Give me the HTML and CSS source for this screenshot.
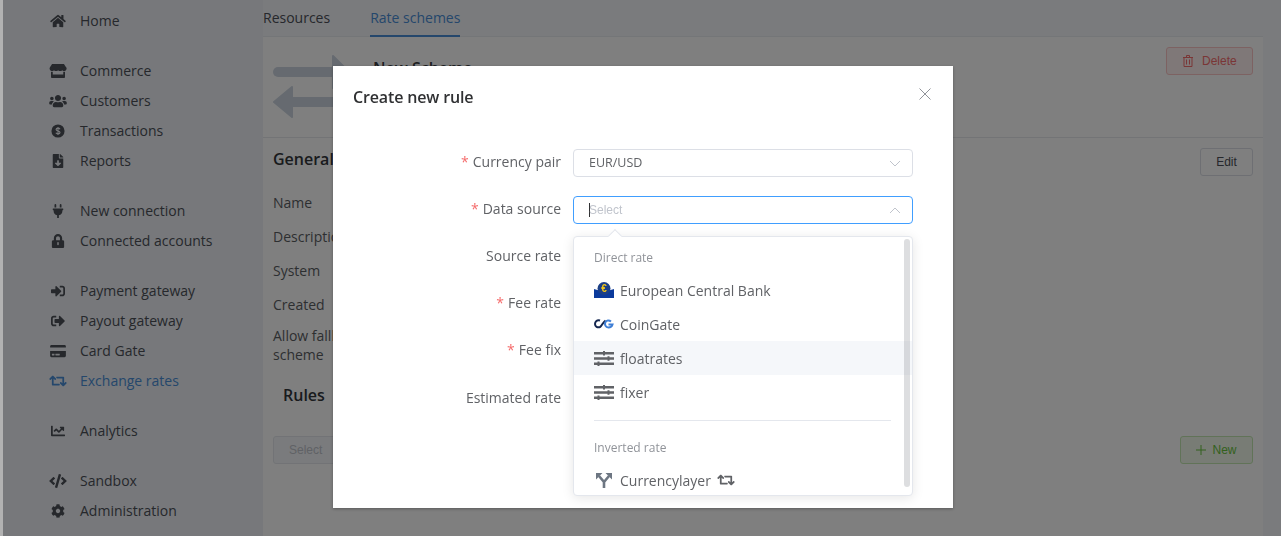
FILE: index.html
```html
<!DOCTYPE html>
<html lang="en">
<head>
    <meta charset="UTF-8">
    <meta name="viewport" content="width=device-width, initial-scale=1.0">
    <title>Rate schemes</title>
    <link rel="stylesheet" href="styles.css">
</head>
<body>

    <svg class="icon-defs" aria-hidden="true">
        <symbol id="i-home" viewBox="0 0 576 512"><path d="M280.37 148.26L96 300.11V464a16 16 0 0 0 16 16l112.06-.29a16 16 0 0 0 15.92-16V368a16 16 0 0 1 16-16h64a16 16 0 0 1 16 16v95.64a16 16 0 0 0 16 16.05L464 480a16 16 0 0 0 16-16V300L295.67 148.26a12.19 12.19 0 0 0-15.3 0zM571.6 251.47L488 182.56V44.05a12 12 0 0 0-12-12h-56a12 12 0 0 0-12 12v72.61L318.47 43a48 48 0 0 0-61 0L4.34 251.47a12 12 0 0 0-1.6 16.9l25.5 31A12 12 0 0 0 45.15 301l235.22-193.74a12.19 12.19 0 0 1 15.3 0L530.9 301a12 12 0 0 0 16.9-1.6l25.5-31a12 12 0 0 0-1.7-16.93z"/></symbol>
        <symbol id="i-store" viewBox="0 0 616 512"><path d="M602 118.6L537.1 15C531.3 5.7 521 0 510 0H106C95 0 84.7 5.7 78.9 15L14 118.6c-33.9 54.1-3.9 129.3 59.4 137.9 4.6.6 9.1.9 13.7.9 29.9 0 56.4-13.1 74.8-33.4 18.4 20.3 45 33.4 74.8 33.4 29.9 0 56.4-13.1 74.8-33.4 18.4 20.3 45 33.4 74.8 33.4 29.9 0 56.4-13.1 74.8-33.4 18.5 20.3 45 33.4 74.8 33.4 4.7 0 9.2-.3 13.7-.9 63.5-8.5 93.6-83.7 59.6-137.9zM529.5 288c-10 0-19.9-1.5-29.5-3.8V384H116v-99.8c-9.6 2.2-19.5 3.8-29.5 3.8-6 0-12.1-.4-18-1.2-5.6-.8-11.1-2.1-16.4-3.6V480c0 17.7 14.3 32 32 32h448c17.7 0 32-14.3 32-32V283.2c-5.4 1.6-10.8 2.9-16.4 3.6-6.1.8-12.1 1.2-18.2 1.2z"/></symbol>
        <symbol id="i-users" viewBox="0 0 640 512"><path d="M96 224c35.3 0 64-28.7 64-64s-28.7-64-64-64-64 28.7-64 64 28.7 64 64 64zm448 0c35.3 0 64-28.7 64-64s-28.7-64-64-64-64 28.7-64 64 28.7 64 64 64zm32 32h-64c-17.6 0-33.5 7.1-45.1 18.6 40.3 22.1 68.9 62 75.1 109.4h66c17.7 0 32-14.3 32-32v-32c0-35.3-28.7-64-64-64zm-256 0c61.9 0 112-50.1 112-112S381.9 32 320 32 208 82.1 208 144s50.1 112 112 112zm76.8 32h-8.3c-20.8 10-43.9 16-68.5 16s-47.6-6-68.5-16h-8.3C179.6 288 128 339.6 128 403.2V432c0 26.5 21.5 48 48 48h288c26.5 0 48-21.5 48-48v-28.8c0-63.6-51.6-115.2-115.2-115.2zm-223.7-13.4C161.5 263.1 145.6 256 128 256H64c-35.3 0-64 28.7-64 64v32c0 17.7 14.3 32 32 32h65.9c6.3-47.4 34.9-87.3 75.2-109.4z"/></symbol>
        <symbol id="i-dollar" viewBox="0 0 16 16"><circle cx="8" cy="8" r="7.5"/><path d="M10.3 5.900C9.900 5 9 4.700 8 4.700c-1.200 0-2.200.6-2.200 1.600 0 2.200 4.500 1.200 4.500 3.400 0 1-1 1.600-2.300 1.600-1.100 0-2-.4-2.400-1.300M8 3.500v9" fill="none" stroke="#eef1f6" stroke-width="1.300"/></symbol>
        <symbol id="i-report" viewBox="0 0 384 512"><path d="M224 136V0H24C10.7 0 0 10.7 0 24v464c0 13.3 10.7 24 24 24h336c13.3 0 24-10.7 24-24V160H248c-13.2 0-24-10.8-24-24zm76.45 211.36l-96.42 95.7c-6.65 6.61-17.39 6.61-24.04 0l-96.42-95.7C73.42 337.29 80.54 320 94.82 320H160v-80c0-8.84 7.16-16 16-16h32c8.84 0 16 7.16 16 16v80h65.18c14.28 0 21.4 17.29 11.27 27.36zM377 105L279.1 7c-4.5-4.5-10.6-7-17-7H256v128h128v-6.1c0-6.3-2.5-12.4-7-16.9z"/></symbol>
        <symbol id="i-plug" viewBox="0 0 384 512"><path d="M320,32a32,32,0,0,0-64,0v96h64Zm48,128H16A16,16,0,0,0,0,176v32a16,16,0,0,0,16,16H32v32A160.07,160.07,0,0,0,160,412.8V512h64V412.8A160.07,160.07,0,0,0,352,256V224h16a16,16,0,0,0,16-16V176A16,16,0,0,0,368,160ZM128,32a32,32,0,0,0-64,0v96h64Z"/></symbol>
        <symbol id="i-lock" viewBox="0 0 448 512"><path d="M400 224h-24v-72C376 68.2 307.8 0 224 0S72 68.2 72 152v72H48c-26.500 0-48 21.500-48 48v192c0 26.500 21.500 48 48 48h352c26.500 0 48-21.500 48-48V272c0-26.500-21.500-48-48-48zm-104 0H152v-72c0-39.700 32.300-72 72-72s72 32.300 72 72v72z"/><path d="M224 320v64" stroke="#eef1f6" stroke-width="56" stroke-linecap="round"/></symbol>
        <symbol id="i-signin" viewBox="0 0 512 512"><path d="M416 448h-84c-6.600 0-12-5.400-12-12v-40c0-6.600 5.400-12 12-12h84c17.700 0 32-14.300 32-32V160c0-17.700-14.300-32-32-32h-84c-6.600 0-12-5.400-12-12V76c0-6.600 5.400-12 12-12h84c53 0 96 43 96 96v192c0 53-43 96-96 96zm-47-201L201 79c-15-15-41-4.500-41 17v96H24c-13.300 0-24 10.700-24 24v96c0 13.300 10.700 24 24 24h136v96c0 21.500 26 32 41 17l168-168c9.300-9.400 9.300-24.600 0-34z"/></symbol>
        <symbol id="i-signout" viewBox="0 0 512 512"><path d="M497 273L329 441c-15 15-41 4.500-41-17v-96H152c-13.300 0-24-10.700-24-24v-96c0-13.300 10.700-24 24-24h136V88c0-21.400 25.900-32 41-17l168 168c9.300 9.400 9.300 24.600 0 34zM192 436v-40c0-6.600-5.400-12-12-12H96c-17.700 0-32-14.300-32-32V160c0-17.700 14.300-32 32-32h84c6.600 0 12-5.400 12-12V76c0-6.600-5.400-12-12-12H96c-53 0-96 43-96 96v192c0 53 43 96 96 96h84c6.600 0 12-5.400 12-12z"/></symbol>
        <symbol id="i-card" viewBox="0 0 576 512"><path d="M0 432c0 26.500 21.500 48 48 48h480c26.500 0 48-21.500 48-48V256H0v176zm192-68c0-6.600 5.400-12 12-12h136c6.600 0 12 5.400 12 12v40c0 6.600-5.400 12-12 12H204c-6.600 0-12-5.400-12-12v-40zm-128 0c0-6.600 5.400-12 12-12h72c6.600 0 12 5.400 12 12v40c0 6.600-5.400 12-12 12H76c-6.600 0-12-5.400-12-12v-40zM576 80v48H0V80c0-26.500 21.500-48 48-48h480c26.500 0 48 21.500 48 48z"/></symbol>
        <symbol id="i-retweet" viewBox="0 0 640 512"><path d="M629.657 343.598L528.971 444.284c-9.373 9.372-24.568 9.372-33.941 0L394.343 343.598c-9.373-9.373-9.373-24.569 0-33.941l10.823-10.823c9.562-9.562 25.133-9.340 34.419.492L480 342.118V160H292.451a24.005 24.005 0 0 1-16.971-7.029l-16-16C244.361 121.851 255.069 96 276.451 96H520c13.255 0 24 10.745 24 24v222.118l40.416-42.792c9.285-9.831 24.856-10.054 34.419-.492l10.823 10.823c9.372 9.372 9.372 24.569-.001 33.941zm-265.138 15.431A23.999 23.999 0 0 0 347.548 352H160V169.881l40.416 42.792c9.286 9.831 24.856 10.054 34.419.491l10.822-10.822c9.373-9.373 9.373-24.569 0-33.941L144.971 67.716c-9.373-9.373-24.569-9.373-33.941 0L10.343 168.402c-9.373 9.373-9.373 24.569 0 33.941l10.822 10.822c9.562 9.562 25.133 9.340 34.419-.491L96 169.881V392c0 13.255 10.745 24 24 24h243.549c21.382 0 32.090-25.851 16.971-40.971l-16.001-16z"/></symbol>
        <symbol id="i-chart" viewBox="0 0 512 512"><path d="M496 384H64V80c0-8.840-7.160-16-16-16H16C7.160 64 0 71.160 0 80v336c0 17.670 14.330 32 32 32h464c8.840 0 16-7.160 16-16v-32c0-8.840-7.160-16-16-16zM464 96H345.940c-21.380 0-32.090 25.850-16.970 40.970l32.400 32.400L288 242.750l-73.370-73.370c-12.500-12.500-32.760-12.500-45.250 0l-68.690 68.690c-6.250 6.250-6.250 16.380 0 22.630l22.620 22.620c6.250 6.250 16.380 6.250 22.630 0L192 237.250l73.370 73.370c12.500 12.500 32.760 12.500 45.250 0l96-96 32.400 32.400c15.120 15.120 40.970 4.410 40.970-16.970V112c.01-8.840-7.150-16-15.990-16z"/></symbol>
        <symbol id="i-code" viewBox="0 0 640 512"><path d="M278.900 511.500l-61-17.700c-6.400-1.800-10-8.500-8.200-14.900L346.200 8.700c1.800-6.400 8.500-10 14.900-8.200l61 17.700c6.400 1.800 10 8.500 8.200 14.900L293.800 503.300c-1.900 6.400-8.500 10.100-14.900 8.200zm-114-112.200l43.500-46.400c4.600-4.900 4.300-12.700-.8-17.200L117 256l90.600-79.700c5.100-4.500 5.500-12.300.8-17.200l-43.500-46.400c-4.500-4.800-12.100-5.100-17-.5L3.800 247.200c-5.100 4.700-5.100 12.800 0 17.500l144.100 135.100c4.900 4.600 12.500 4.400 17-.5zm327.200.6l144.100-135.100c5.100-4.700 5.100-12.800 0-17.500L492.100 112.100c-4.800-4.500-12.400-4.300-17 .5L431.600 159c-4.600 4.900-4.300 12.700.8 17.200L523 256l-90.600 79.700c-5.100 4.500-5.500 12.300-.8 17.200l43.500 46.400c4.500 4.900 12.100 5.100 17 .6z"/></symbol>
        <symbol id="i-cog" viewBox="0 0 512 512"><path d="M487.400 315.700l-42.600-24.600c4.300-23.200 4.300-47 0-70.200l42.600-24.600c4.900-2.800 7.100-8.600 5.500-14-11.100-35.600-30-67.800-54.700-94.600-3.800-4.100-10-5.100-14.800-2.300L380.800 110c-17.900-15.400-38.500-27.300-60.800-35.100V25.800c0-5.600-3.900-10.500-9.400-11.700-36.700-8.200-74.300-7.800-109.200 0-5.500 1.200-9.400 6.100-9.400 11.700V75c-22.200 7.900-42.800 19.800-60.800 35.100L88.700 85.500c-4.900-2.800-11-1.900-14.800 2.300-24.700 26.700-43.600 58.900-54.700 94.600-1.700 5.400.6 11.200 5.500 14L67.300 221c-4.300 23.200-4.300 47 0 70.200l-42.600 24.600c-4.900 2.800-7.100 8.600-5.500 14 11.100 35.600 30 67.800 54.700 94.600 3.800 4.100 10 5.100 14.800 2.300l42.600-24.600c17.900 15.400 38.500 27.300 60.800 35.100v49.200c0 5.600 3.900 10.500 9.400 11.700 36.700 8.200 74.300 7.800 109.200 0 5.500-1.200 9.400-6.100 9.400-11.700v-49.200c22.200-7.900 42.800-19.800 60.800-35.100l42.600 24.600c4.900 2.800 11 1.900 14.800-2.300 24.700-26.700 43.600-58.900 54.700-94.600 1.500-5.500-.7-11.300-5.600-14.100zM256 336c-44.100 0-80-35.900-80-80s35.900-80 80-80 80 35.900 80 80-35.900 80-80 80z"/></symbol>
        <symbol id="i-sliders" viewBox="0 0 20 18">
            <path d="M0 3h20v2.500H0zM0 8.300h20v2.500H0zM0 13.600h20v2.500H0z"/>
            <path d="M9 2h2v4.500H9zM13.500 7.300h2v4.500h-2zM3.500 12.600h2v4.500h-2z"/>
        </symbol>
    </svg>

    <div class="app">
        <nav class="sidebar">
            <div class="nav-group">
                <a class="nav-item"><svg class="nav-icon"><use href="#i-home"/></svg>Home</a>
            </div>
            <div class="nav-group">
                <a class="nav-item"><svg class="nav-icon"><use href="#i-store"/></svg>Commerce</a>
                <a class="nav-item"><svg class="nav-icon"><use href="#i-users"/></svg>Customers</a>
                <a class="nav-item"><svg class="nav-icon"><use href="#i-dollar"/></svg>Transactions</a>
                <a class="nav-item"><svg class="nav-icon"><use href="#i-report"/></svg>Reports</a>
            </div>
            <div class="nav-group">
                <a class="nav-item"><svg class="nav-icon"><use href="#i-plug"/></svg>New connection</a>
                <a class="nav-item"><svg class="nav-icon"><use href="#i-lock"/></svg>Connected accounts</a>
            </div>
            <div class="nav-group">
                <a class="nav-item"><svg class="nav-icon"><use href="#i-signin"/></svg>Payment gateway</a>
                <a class="nav-item"><svg class="nav-icon"><use href="#i-signout"/></svg>Payout gateway</a>
                <a class="nav-item"><svg class="nav-icon"><use href="#i-card"/></svg>Card Gate</a>
                <a class="nav-item active"><svg class="nav-icon"><use href="#i-retweet"/></svg>Exchange rates</a>
            </div>
            <div class="nav-group">
                <a class="nav-item"><svg class="nav-icon"><use href="#i-chart"/></svg>Analytics</a>
            </div>
            <div class="nav-group">
                <a class="nav-item"><svg class="nav-icon"><use href="#i-code"/></svg>Sandbox</a>
                <a class="nav-item"><svg class="nav-icon"><use href="#i-cog"/></svg>Administration</a>
            </div>
        </nav>

        <main class="content">
            <div class="tabs">
                <span class="tab">Resources</span>
                <span class="tab active">Rate schemes</span>
            </div>

            <section class="card">
                <header class="card-head">
                    <svg class="scheme-icon" viewBox="0 0 90 64" fill="none" stroke="#ccd5e0">
                        <path d="M5 17h68" stroke-width="10" stroke-linecap="round"/>
                        <path d="M60 1l16 16-16 16z" fill="#ccd5e0" stroke-width="2" stroke-linejoin="round"/>
                        <path d="M18 47h62" stroke-width="10" stroke-linecap="round"/>
                        <path d="M19 32L1 47l18 15z" fill="#ccd5e0" stroke-width="2" stroke-linejoin="round"/>
                    </svg>
                    <h2 class="scheme-name">New Scheme</h2>
                    <button class="btn btn-danger">
                        <svg class="btn-icon" viewBox="0 0 10 12" fill="none" stroke="currentColor"><path d="M0 2.500h10M3.500 2.500V.5h3v2M1 2.500V11.500h8V2.500M3.500 4.500v5M6.500 4.500v5"/></svg>
                        Delete
                    </button>
                </header>

                <div class="general-head">
                    <h3 class="section-title">General information</h3>
                    <button class="btn btn-edit">Edit</button>
                </div>

                <dl class="details">
                    <dt>Name</dt>
                    <dt>Description</dt>
                    <dt>System</dt>
                    <dt>Created</dt>
                    <dt class="wrap">Allow fallback scheme</dt>
                </dl>

                <h3 class="section-title rules-title">Rules</h3>

                <div class="rules-bar">
                    <div class="rules-select">Select</div>
                    <button class="btn btn-success">
                        <svg class="plus" viewBox="0 0 10 10" fill="none" stroke="currentColor"><path d="M5 0v10M0 5h10"/></svg>
                        New
                    </button>
                </div>
            </section>
        </main>
    </div>

    <div class="overlay">
        <div class="modal">
            <div class="modal-head">
                <span class="modal-title">Create new rule</span>
                <svg class="modal-close" viewBox="0 0 12 12" fill="none" stroke="currentColor"><path d="M.5.5l11 11M11.500.5l-11 11"/></svg>
            </div>

            <form class="rule-form">
                <div class="form-row">
                    <label><span class="req">*</span>Currency pair</label>
                    <div class="select">
                        <span class="select-value">EUR/USD</span>
                        <svg class="chevron" viewBox="0 0 12 7" fill="none" stroke="currentColor"><path d="M1 1l5 5 5-5"/></svg>
                    </div>
                </div>
                <div class="form-row">
                    <label><span class="req">*</span>Data source</label>
                    <div class="select focused">
                        <span class="select-caret"></span>
                        <span class="select-placeholder">Select</span>
                        <svg class="chevron" viewBox="0 0 12 7" fill="none" stroke="currentColor"><path d="M1 6l5-5 5 5"/></svg>
                    </div>
                </div>
                <div class="form-row"><label>Source rate</label></div>
                <div class="form-row"><label><span class="req">*</span>Fee rate</label></div>
                <div class="form-row"><label><span class="req">*</span>Fee fix</label></div>
                <div class="form-row last"><label>Estimated rate</label></div>
            </form>

            <div class="dropdown">
                <span class="dropdown-arrow"></span>
                <div class="group-label">Direct rate</div>
                <div class="option">
                    <svg class="option-icon" viewBox="0 0 20 16">
                        <path d="M0 7l5 1.500c3 1 7 1 10 0L20 7v9H0z" fill="#0b3a9c"/>
                        <circle cx="10" cy="6.500" r="6.500" fill="#1c3f86"/>
                        <text x="10" y="10" text-anchor="middle" class="ecb-euro">€</text>
                    </svg>
                    European Central Bank
                </div>
                <div class="option">
                    <svg class="option-icon" viewBox="0 0 20 10" fill="none" stroke-width="2">
                        <path d="M6 1.500C3 .5 1 2.500 1 5s2.500 4 5 3c2-1 3-5 5.500-6.500" stroke="#14264f"/>
                        <path d="M17 2.500C15 .8 12.500 1.200 11.500 3c-1.300 2.300 0 5.500 3 5.500 2.200 0 3.500-1.300 4-3H14.500" stroke="#3f7fd6"/>
                    </svg>
                    CoinGate
                </div>
                <div class="option hover">
                    <svg class="option-icon sliders"><use href="#i-sliders"/></svg>
                    floatrates
                </div>
                <div class="option">
                    <svg class="option-icon sliders"><use href="#i-sliders"/></svg>
                    fixer
                </div>
                <div class="group-sep"></div>
                <div class="group-label">Inverted rate</div>
                <div class="option">
                    <svg class="option-icon" viewBox="0 0 20 16" fill="none" stroke="#6d7682" stroke-width="2.600">
                        <path d="M10 16V10L5 4M10 10l5-6"/>
                        <path d="M2 1h6.500L2 7.500zM18 1h-6.500L18 7.500z" fill="#6d7682" stroke="none"/>
                    </svg>
                    Currencylayer
                    <svg class="retweet"><use href="#i-retweet"/></svg>
                </div>
                <span class="scroll-thumb"></span>
            </div>
        </div>
    </div>

</body>
</html>
```

FILE: styles.css
```css
* { box-sizing: border-box; }
html, body { margin: 0; height: 100%; overflow: hidden; }
body {
    width: 1281px;
    height: 536px;
    font-family: "Open Sans", sans-serif;
    font-size: 14px;
    color: #4c5058;
    background: #f4f6fa;
}
.icon-defs { display: none; }

.app {
    display: flex;
    height: 536px;
    border-left: 3px solid #b2b2b2;
}

/* sidebar */
.sidebar {
    width: 260px;
    flex: none;
    padding-top: 6px;
    background: #eef1f6;
}
.nav-group { margin-bottom: 20px; }
.nav-item {
    display: flex;
    align-items: center;
    height: 30px;
    padding-left: 46px;
    color: #4c5058;
    line-height: 30px;
}
.nav-item.active { color: #4a8fd8; }
.nav-icon {
    width: 18px;
    height: 14px;
    margin-right: 13px;
    fill: currentColor;
    flex: none;
}

/* content */
.content { flex: 1; padding-right: 18px; }
.tabs {
    display: flex;
    gap: 40px;
    height: 37px;
    border-bottom: 1px solid #e9ecf1;
}
.tab {
    height: 37px;
    line-height: 35px;
    color: #4c5058;
}
.tab.active {
    color: #4a8fd8;
    border-bottom: 2px solid #4a8fd8;
}

.card { height: 499px; background: #fff; }
.card-head {
    position: relative;
    display: flex;
    height: 101px;
    border-bottom: 1px solid #e6e8ec;
    padding: 18px 10px 0;
}
.scheme-icon { width: 90px; height: 64px; margin-right: 10px; flex: none; }
.scheme-name {
    margin: 2px 0 0;
    font-size: 16px;
    font-weight: 600;
    line-height: 22px;
    color: #3a3d42;
}
.btn {
    height: 28px;
    padding: 0 12px;
    font-family: "Liberation Sans", sans-serif;
    font-size: 12px;
    color: #4c5058;
    background: #fff;
    border: 1px solid #dcdfe6;
    border-radius: 3px;
}
.btn-edit { width: 53px; padding: 0; }
.btn-danger {
    display: flex;
    align-items: center;
    gap: 9px;
    width: 87px;
    margin: -8px 0 0 auto;
    padding: 0 0 0 16px;
    color: #f56c6c;
    background: #fef0f0;
    border-color: #fbc4c4;
}
.btn-icon { width: 10px; height: 12px; flex: none; }
.btn-success {
    display: flex;
    align-items: center;
    justify-content: center;
    gap: 6px;
    width: 73px;
    padding: 0;
    color: #67c23a;
    background: #f0f9eb;
    border-color: #c2e7b0;
}
.plus { width: 10px; height: 10px; }

.general-head {
    display: flex;
    justify-content: space-between;
    align-items: flex-start;
    padding: 10px 10px 0;
}
.section-title {
    margin: 0;
    font-size: 16px;
    font-weight: 600;
    line-height: 22px;
    color: #33363b;
}
.details { margin: 10px 0 0; padding: 0 10px; }
.details dt {
    height: 34px;
    line-height: 34px;
    color: #5b5e63;
}
.details dt.wrap {
    width: 100px;
    height: auto;
    margin-top: 4px;
    line-height: 19px;
}
.rules-title { margin-top: 20px; padding-left: 20px; }
.rules-bar {
    display: flex;
    justify-content: space-between;
    align-items: center;
    padding: 0 10px;
    margin-top: 30px;
}
.rules-select {
    width: 240px;
    height: 28px;
    padding-left: 15px;
    line-height: 26px;
    font-family: "Liberation Sans", sans-serif;
    font-size: 12px;
    color: #c0c4cc;
    background: #f5f7fa;
    border: 1px solid #e4e7ed;
    border-radius: 3px;
}

/* modal */
.overlay {
    position: fixed;
    top: 0;
    right: 0;
    bottom: 0;
    left: 3px;
    background: rgba(0, 0, 0, 0.5);
}
.modal {
    position: relative;
    width: 620px;
    height: 442px;
    margin: 66px 0 0 330px;
    background: #fff;
    box-shadow: 0 1px 3px rgba(0, 0, 0, 0.3);
}
.modal-head {
    display: flex;
    justify-content: space-between;
    height: 83px;
    padding: 20px 22px 0 20px;
}
.modal-title {
    font-size: 16px;
    font-weight: 600;
    line-height: 22px;
    letter-spacing: -0.15px;
    color: #303133;
}
.modal-close { width: 12px; height: 12px; margin-top: 2px; color: #909399; }

.form-row {
    display: flex;
    align-items: center;
    height: 28px;
    margin-bottom: 19px;
}
.form-row.last { margin-top: 20px; }
.form-row label {
    width: 228px;
    padding-bottom: 4px;
    text-align: right;
    color: #606266;
}
.req { margin-right: 4px; color: #f56c6c; }
.select {
    display: flex;
    align-items: center;
    width: 340px;
    height: 28px;
    margin-left: 12px;
    padding: 0 15px;
    border: 1px solid #dcdfe6;
    border-radius: 4px;
    font-size: 12.5px;
    color: #606266;
}
.select-value { padding-bottom: 2px; }
.select.focused { border-color: #409eff; font-size: 12px; }
.select-caret { width: 1px; height: 14px; margin-right: -1px; background: #303133; }
.select-placeholder {
    font-family: "Liberation Sans", sans-serif;
    color: #c0c4cc;
}
.chevron { width: 12px; height: 7px; margin-left: auto; margin-right: -4px; color: #c0c4cc; }

/* dropdown */
.dropdown {
    position: absolute;
    top: 170px;
    left: 240px;
    width: 340px;
    height: 260px;
    padding-top: 6px;
    background: #fff;
    border: 1px solid #e4e7ed;
    border-radius: 4px;
    box-shadow: 0 2px 12px rgba(0, 0, 0, 0.1);
}
.dropdown-arrow {
    position: absolute;
    top: -6px;
    left: 36px;
    width: 10px;
    height: 10px;
    background: #fff;
    border-top: 1px solid #e4e7ed;
    border-left: 1px solid #e4e7ed;
    transform: rotate(45deg);
}
.group-label {
    height: 30px;
    padding-left: 20px;
    line-height: 30px;
    font-size: 12px;
    color: #909399;
}
.option {
    display: flex;
    align-items: center;
    height: 34px;
    padding-left: 20px;
    color: #606266;
}
.option.hover { background: #f5f7fa; }
.option-icon { width: 20px; height: 18px; margin-right: 6px; flex: none; }
.sliders { fill: #606266; }
.ecb-euro { font-family: "Liberation Sans", sans-serif; font-size: 10px; font-weight: 700; fill: #f0c419; }
.retweet { width: 18px; height: 14px; margin-left: 6px; fill: #606266; }
.group-sep { height: 1px; margin: 11px 21px 12px 20px; background: #e4e7ed; }
.scroll-thumb {
    position: absolute;
    top: 2px;
    right: 2px;
    width: 6px;
    height: 248px;
    border-radius: 3px;
    background: rgba(144, 147, 153, 0.3);
}
```
